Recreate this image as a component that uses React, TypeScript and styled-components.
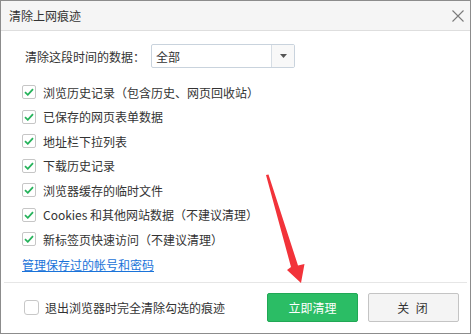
import React from "react";
import styled, { createGlobalStyle } from "styled-components";

const GlobalStyle = createGlobalStyle`
  html, body {
    margin: 0;
    padding: 0;
    background: #fff;
  }
  body {
    font-family: "Microsoft YaHei", "Noto Sans CJK SC", "Noto Sans", sans-serif;
    font-size: 12px;
    color: #333;
    text-spacing-trim: space-all;
  }
`;

const items = [
  "浏览历史记录（包含历史、网页回收站）",
  "已保存的网页表单数据",
  "地址栏下拉列表",
  "下载历史记录",
  "浏览器缓存的临时文件",
  "Cookies 和其他网站数据（不建议清理）",
  "新标签页快速访问（不建议清理）",
];

function ClearDialog() {
  return (
    <Window>
      <TitleBar>
        <TitleText>清除上网痕迹</TitleText>
        <CloseIcon viewBox="0 0 12 12">
          <path d="M0.5 0.5 L11.5 11.5 M11.5 0.5 L0.5 11.5" stroke="#7a7a7a" strokeWidth="1.1" fill="none" />
        </CloseIcon>
      </TitleBar>

      <Body>
        <RangeRow>
          <RangeLabel>清除这段时间的数据：</RangeLabel>
          <Select>
            <SelectValue>全部</SelectValue>
            <SelectButton>
              <svg width="7" height="4" viewBox="0 0 7 4">
                <path d="M0 0 L7 0 L3.5 4 Z" fill="#555" />
              </svg>
            </SelectButton>
          </Select>
        </RangeRow>

        <CheckList>
          {items.map((label) => (
            <CheckRow key={label}>
              <CheckBox>
                <svg width="10" height="8" viewBox="0 0 10 8">
                  <path d="M1 4.2 L3.8 6.8 L9 1.2" stroke="#27b35c" strokeWidth="1.8" fill="none" />
                </svg>
              </CheckBox>
              <span>{label}</span>
            </CheckRow>
          ))}
        </CheckList>

        <LinkRow>
          <ManageLink href="#">管理保存过的帐号和密码</ManageLink>
        </LinkRow>
      </Body>

      <Divider />

      <Footer>
        <ExitOption>
          <EmptyBox />
          <span>退出浏览器时完全清除勾选的痕迹</span>
        </ExitOption>
        <Buttons>
          <Button $primary>立即清理</Button>
          <Button>关&nbsp;闭</Button>
        </Buttons>
      </Footer>

      <Arrow viewBox="0 0 60 125">
        <polygon
          points="16,10 41,102 37,105 51,118 54.5,99 48,100.5 18.5,9.5"
          fill="#f2333a"
        />
      </Arrow>
    </Window>
  );
}

export default function App() {
  return (
    <>
      <GlobalStyle />
      <ClearDialog />
    </>
  );
}

const Window = styled.div`
  position: relative;
  width: 471px;
  height: 334px;
  box-sizing: border-box;
  border: 1px solid #8c8c8c;
  background: #fff;
  display: flex;
  flex-direction: column;
`;

const TitleBar = styled.div`
  height: 29px;
  flex-shrink: 0;
  display: flex;
  align-items: center;
  justify-content: space-between;
  padding: 0 6px 0 8px;
  background: #f5f5f5;
  border-bottom: 1px solid #dedede;
`;

const TitleText = styled.div`
  font-size: 12px;
  color: #333;
`;

const CloseIcon = styled.svg`
  width: 12px;
  height: 12px;
`;

const Body = styled.div`
  padding: 13px 0 0 21px;
  display: flex;
  flex-direction: column;
`;

const RangeRow = styled.div`
  display: flex;
  align-items: center;
  height: 24px;
`;

const RangeLabel = styled.div`
  width: 129px;
  padding-left: 3px;
  box-sizing: border-box;
`;

const Select = styled.div`
  width: 144px;
  height: 24px;
  box-sizing: border-box;
  border: 1px solid #c9d3dd;
  border-radius: 2px;
  display: flex;
`;

const SelectValue = styled.div`
  flex: 1;
  display: flex;
  align-items: center;
  padding-left: 4px;
`;

const SelectButton = styled.div`
  width: 22px;
  border-left: 1px solid #d6dde4;
  background: #f8f8f8;
  display: flex;
  align-items: center;
  justify-content: center;
`;

const CheckList = styled.div`
  margin-top: 12px;
  display: flex;
  flex-direction: column;
`;

const CheckRow = styled.label`
  height: 24.5px;
  display: flex;
  align-items: center;
  gap: 7px;
`;

const CheckBox = styled.span`
  width: 14px;
  height: 14px;
  box-sizing: border-box;
  border: 1px solid #c6c6c6;
  border-radius: 2px;
  background: #fff;
  display: flex;
  align-items: center;
  justify-content: center;
`;

const LinkRow = styled.div`
  height: 25px;
  display: flex;
  align-items: center;
`;

const ManageLink = styled.a`
  color: #1a73d9;
  text-decoration: underline;
`;

const Divider = styled.div`
  height: 1px;
  background: #e6e6e6;
  margin: 5px 3px 0;
`;

const Footer = styled.div`
  flex: 1;
  display: flex;
  align-items: center;
  justify-content: space-between;
  padding: 0 11px 0 23px;
`;

const ExitOption = styled.label`
  display: flex;
  align-items: center;
  gap: 6px;
`;

const EmptyBox = styled.span`
  width: 15px;
  height: 15px;
  box-sizing: border-box;
  border: 1px solid #c8c8c8;
  border-radius: 3px;
  background: #fff;
`;

const Buttons = styled.div`
  display: flex;
  gap: 10px;
`;

const Button = styled.button<{ $primary?: boolean }>`
  width: 91px;
  height: 29px;
  box-sizing: border-box;
  border-radius: 2px;
  font-family: inherit;
  font-size: 12px;
  cursor: pointer;
  border: 1px solid ${(p) => (p.$primary ? "#21a855" : "#c4c4c4")};
  background: ${(p) => (p.$primary ? "#2bbd65" : "#f4f4f4")};
  color: ${(p) => (p.$primary ? "#fff" : "#333")};
  letter-spacing: ${(p) => (p.$primary ? "0" : "2px")};
`;

const Arrow = styled.svg`
  position: absolute;
  left: 249px;
  top: 164px;
  width: 60px;
  height: 125px;
  pointer-events: none;
`;
